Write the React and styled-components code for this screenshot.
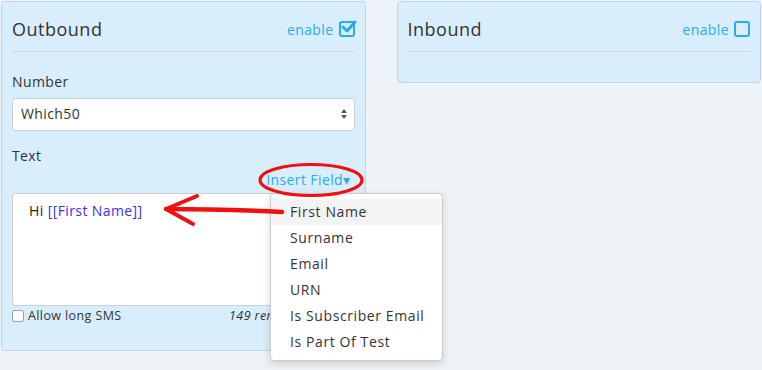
import React from 'react'
import styled, { createGlobalStyle } from 'styled-components'

const GlobalStyle = createGlobalStyle`
  body {
    margin: 0;
    background: #eef3f8;
    font-family: "Open Sans", "Liberation Sans", sans-serif;
    letter-spacing: 0.4px;
    color: #333;
  }
`

const Page = styled.div`
  position: relative;
  width: 762px;
  height: 370px;
  display: flex;
  align-items: flex-start;
  gap: 31px;
  padding: 1px;
  box-sizing: border-box;
`

const Panel = styled.div`
  width: 365px;
  box-sizing: border-box;
  background: #d9eefd;
  border: 1px solid #c6d3dd;
  border-radius: 4px;
  padding: 0 10px 0 10px;
  height: ${p => p.$height}px;
`

const Header = styled.div`
  display: flex;
  align-items: center;
  justify-content: space-between;
  height: 44px;
  padding-top: 5px;
  border-bottom: 1px solid #c9d7e0;
`

const Title = styled.div`
  font-size: 18px;
  color: #333;
  letter-spacing: 0.5px;
`

const Enable = styled.div`
  display: flex;
  align-items: center;
  gap: 5px;
  color: #2ba9f1;
  font-size: 14px;
`

const Box = styled.span`
  width: 12px;
  height: 12px;
  border: 2px solid #2ba9f1;
  border-radius: 3px;
  position: relative;
  display: inline-block;
`

const Label = styled.div`
  font-size: 14px;
  color: #333;
  margin-top: ${p => p.$top}px;
`

const Select = styled.div`
  margin-top: 7px;
  height: 33px;
  box-sizing: border-box;
  background: #fff;
  border: 1px solid #c8d0d6;
  border-radius: 4px;
  display: flex;
  align-items: center;
  justify-content: space-between;
  padding: 0 6px 2px 8px;
  font-size: 14px;
  color: #333;
`

const InsertRow = styled.div`
  display: flex;
  justify-content: flex-end;
  padding-right: 4px;
  margin-top: 5px;
  font-size: 14px;
  color: #2ba9f1;
`

const TextArea = styled.div`
  margin-top: 4px;
  height: 113px;
  box-sizing: border-box;
  background: #fff;
  border: 1px solid #c8d0d6;
  border-radius: 4px;
  padding: 7px 16px;
  font-size: 14px;
  color: #222;
`

const Field = styled.span`
  color: #3b33e6;
`

const Footer = styled.div`
  display: flex;
  align-items: center;
  justify-content: space-between;
  margin-top: 1px;
  font-size: 12.5px;
  color: #333;
`

const Allow = styled.label`
  display: flex;
  align-items: center;
  gap: 4px;
`

const SmallBox = styled.span`
  width: 10px;
  height: 10px;
  border: 1px solid #9aa3aa;
  border-radius: 2px;
  background: #fff;
  display: inline-block;
`

const Remaining = styled.span`
  font-style: italic;
  margin-right: 40px;
`

const Menu = styled.ul`
  position: absolute;
  left: 270px;
  top: 193px;
  width: 173px;
  margin: 0;
  padding: 5px 0;
  list-style: none;
  background: #fff;
  border: 1px solid #ccc;
  border-radius: 4px;
  box-shadow: 0 3px 8px rgba(0, 0, 0, 0.15);
  box-sizing: border-box;
`

const Item = styled.li`
  height: 26px;
  line-height: 25px;
  padding-left: 19px;
  font-size: 14px;
  letter-spacing: 0.6px;
  color: #333;
  background: ${p => (p.$active ? '#f3f3f3' : 'transparent')};
`

const Overlay = styled.svg`
  position: absolute;
  left: 0;
  top: 0;
  pointer-events: none;
`

const fields = ['First Name', 'Surname', 'Email', 'URN', 'Is Subscriber Email', 'Is Part Of Test']

const Check = ({ checked }) => (
  <Box>
    {checked && (
      <svg width="16" height="14" viewBox="0 0 16 14" style={{ position: 'absolute', left: 0, top: -3 }}>
        <path d="M2 7 L6 11 L14 2" stroke="#2ba9f1" strokeWidth="3" fill="none" strokeLinecap="round" strokeLinejoin="round" />
      </svg>
    )}
  </Box>
)

const App = () => (
  <Page>
    <GlobalStyle />
    <Panel $height={350}>
      <Header>
        <Title>Outbound</Title>
        <Enable>enable <Check checked /></Enable>
      </Header>
      <Label $top={20}>Number</Label>
      <Select>
        Which50
        <svg width="8" height="12" viewBox="0 0 8 12">
          <path d="M4 1 L7 5 L1 5 Z M4 11 L7 7 L1 7 Z" fill="#555" />
        </svg>
      </Select>
      <Label $top={15}>Text</Label>
      <InsertRow>Insert Field&#9662;</InsertRow>
      <TextArea>
        Hi <Field>[[First Name]]</Field>
      </TextArea>
      <Footer>
        <Allow><SmallBox />Allow long SMS</Allow>
        <Remaining>149 remaining</Remaining>
      </Footer>
    </Panel>
    <Panel $height={82}>
      <Header>
        <Title>Inbound</Title>
        <Enable>enable <Check /></Enable>
      </Header>
    </Panel>
    <Menu>
      {fields.map((f, i) => (
        <Item key={f} $active={i === 0}>{f}</Item>
      ))}
    </Menu>
    <Overlay width="762" height="370">
      <ellipse cx="311" cy="180" rx="51" ry="15.5" fill="none" stroke="#f01010" strokeWidth="3.2" />
      <path d="M282 212 C 240 210, 200 209, 166 209" stroke="#f01010" strokeWidth="4.5" fill="none" strokeLinecap="round" />
      <path d="M197 196 L166 209 L193 224" stroke="#f01010" strokeWidth="4" fill="none" strokeLinecap="round" strokeLinejoin="round" />
    </Overlay>
  </Page>
)

export default App
